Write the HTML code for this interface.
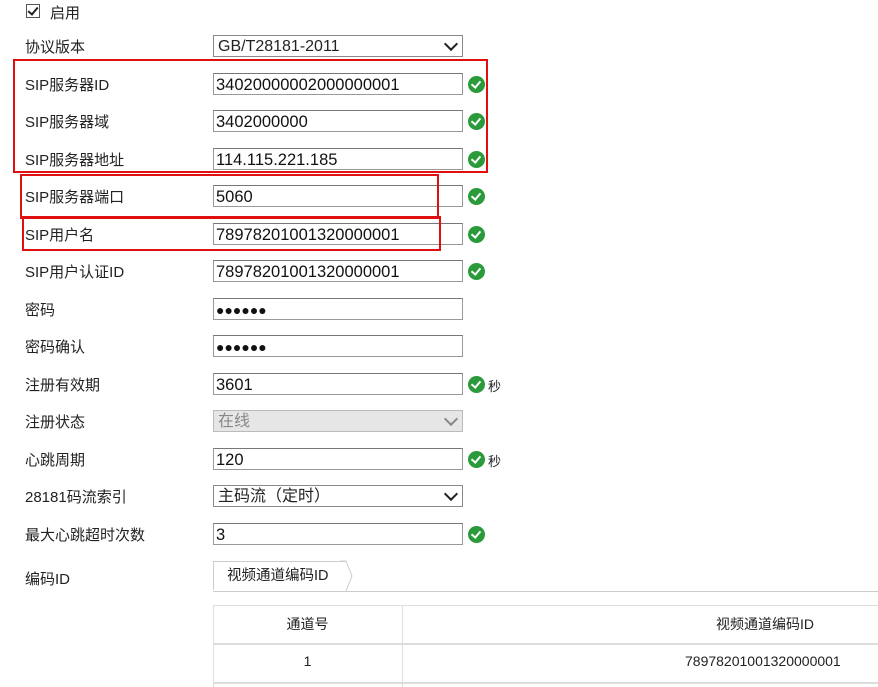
<html><head><style>
body{margin:0;width:878px;height:687px;background:#fff;font-family:"Liberation Sans","Noto Sans CJK SC",sans-serif;font-size:14px;color:#222;position:relative;overflow:hidden}
.a{position:absolute}
.lb{position:absolute;left:25px;font-size:15px;margin-top:-2px}
.in{position:absolute;left:213px;width:246px;height:20px;border:1px solid #999;border-top-color:#777;font-size:16.5px;line-height:22px;padding-left:2px;color:#111}
.sel{position:absolute;left:213px;width:250px;height:22px;border:1px solid #888;font-size:16px;line-height:22px;padding-left:4px;box-sizing:border-box}
.chk{position:absolute;left:468px;width:17px;height:17px;border-radius:50%;background:#2a9a3a;margin-top:1px}
.chk:after{content:"";position:absolute;left:5px;top:3px;width:4px;height:7px;border:solid #fff;border-width:0 2.5px 2.5px 0;transform:rotate(40deg)}
.arr{position:absolute;right:6px;top:3px;width:8px;height:8px;border:solid #222;border-width:0 2px 2px 0;transform:rotate(45deg)}
.rb{position:absolute;border:2px solid #e01010;box-sizing:border-box}
.u{position:absolute;left:488px;font-size:13px}
.dots{font-size:14px;letter-spacing:0px}
</style></head><body>
<div class="a" style="left:26px;top:4px;width:12px;height:12px;border:1px solid #555"></div>
<div class="a" style="left:30px;top:5px;width:4px;height:8px;border:solid #222;border-width:0 2px 2px 0;transform:rotate(40deg)"></div>
<div class="a" style="left:50px;top:2px;font-size:15px">启用</div>

<div class="lb" style="top:38px">协议版本</div>
<div class="sel" style="top:35px">GB/T28181-2011<span class="arr"></span></div>

<div class="lb" style="top:76px">SIP服务器ID</div><div class="in" style="top:73px">34020000002000000001</div><div class="chk" style="top:75px"></div>
<div class="lb" style="top:113px">SIP服务器域</div><div class="in" style="top:110px">3402000000</div><div class="chk" style="top:112px"></div>
<div class="lb" style="top:151px">SIP服务器地址</div><div class="in" style="top:148px">114.115.221.185</div><div class="chk" style="top:150px"></div>
<div class="lb" style="top:188px">SIP服务器端口</div><div class="in" style="top:185px">5060</div><div class="chk" style="top:187px"></div>
<div class="lb" style="top:226px">SIP用户名</div><div class="in" style="top:223px">78978201001320000001</div><div class="chk" style="top:225px"></div>
<div class="lb" style="top:263px">SIP用户认证ID</div><div class="in" style="top:260px">78978201001320000001</div><div class="chk" style="top:262px"></div>
<div class="lb" style="top:301px">密码</div><div class="in dots" style="top:298px">●●●●●●</div>
<div class="lb" style="top:338px">密码确认</div><div class="in dots" style="top:335px">●●●●●●</div>
<div class="lb" style="top:376px">注册有效期</div><div class="in" style="top:373px">3601</div><div class="chk" style="top:375px"></div><div class="u" style="top:376px">秒</div>
<div class="lb" style="top:413px">注册状态</div>
<div class="sel" style="top:410px;background:#e6e6e6;border-color:#bbb;color:#888">在线<span class="arr" style="border-color:#888"></span></div>
<div class="lb" style="top:451px">心跳周期</div><div class="in" style="top:448px">120</div><div class="chk" style="top:450px"></div><div class="u" style="top:451px">秒</div>
<div class="lb" style="top:488px">28181码流索引</div>
<div class="sel" style="top:485px">主码流（定时）<span class="arr"></span></div>
<div class="lb" style="top:526px">最大心跳超时次数</div><div class="in" style="top:523px">3</div><div class="chk" style="top:525px"></div>
<div class="lb" style="top:570px">编码ID</div>

<div class="a" style="left:213px;top:561px;width:132px;height:29px;border:1px solid #ccc;border-right:none;border-bottom:none;font-size:14.5px;line-height:29px;padding-left:13px;box-sizing:border-box">视频通道编码ID</div>
<svg class="a" style="left:340px;top:560px" width="14" height="32"><path d="M0 1 L6 1 L12 16 L6 31" fill="none" stroke="#ccc"/></svg>
<div class="a" style="left:213px;top:591px;width:665px;height:1px;background:#ccc"></div>

<div class="a" style="left:213px;top:605px;width:665px;height:1px;background:#ddd"></div>
<div class="a" style="left:213px;top:605px;width:1px;height:82px;background:#ddd"></div>
<div class="a" style="left:402px;top:605px;width:1px;height:82px;background:#ddd"></div>
<div class="a" style="left:213px;top:643px;width:665px;height:2px;background:#ddd"></div>
<div class="a" style="left:213px;top:682px;width:665px;height:2px;background:#ddd"></div>
<div class="a" style="left:213px;top:614px;width:189px;text-align:center">通道号</div>
<div class="a" style="left:716px;top:614px">视频通道编码ID</div>
<div class="a" style="left:213px;top:653px;width:189px;text-align:center">1</div>
<div class="a" style="left:685px;top:653px">78978201001320000001</div>

<div class="rb" style="left:13px;top:59px;width:475px;height:114px"></div>
<div class="rb" style="left:20px;top:174px;width:419px;height:45px"></div>
<div class="rb" style="left:22px;top:216px;width:419px;height:35px"></div>
</body></html>
